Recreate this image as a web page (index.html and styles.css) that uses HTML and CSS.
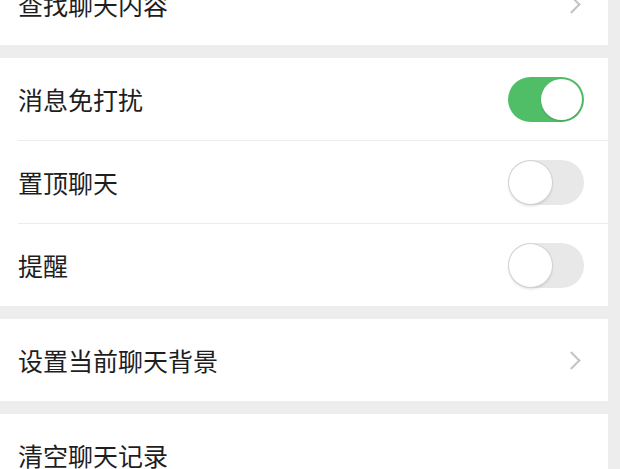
FILE: index.html
```html
<!DOCTYPE html>
<html lang="zh-CN">
<head>
    <meta charset="UTF-8">
    <meta name="viewport" content="width=device-width, initial-scale=1.0">
    <title>聊天信息</title>
    <link rel="stylesheet" href="styles.css">
</head>
<body>
    <div class="settings">
        <div class="group">
            <div class="row">
                <span class="label">查找聊天内容</span>
                <span class="chevron"></span>
            </div>
        </div>

        <div class="group">
            <div class="row">
                <span class="label">消息免打扰</span>
                <span class="switch on"><span class="knob"></span></span>
            </div>
            <div class="row">
                <span class="label">置顶聊天</span>
                <span class="switch"><span class="knob"></span></span>
            </div>
            <div class="row">
                <span class="label">提醒</span>
                <span class="switch"><span class="knob"></span></span>
            </div>
        </div>

        <div class="group">
            <div class="row">
                <span class="label">设置当前聊天背景</span>
                <span class="chevron"></span>
            </div>
        </div>

        <div class="group">
            <div class="row">
                <span class="label">清空聊天记录</span>
            </div>
        </div>
    </div>
</body>
</html>
```

FILE: styles.css
```css
body {
    margin: 0;
    background: #ededed;
    font-family: "Noto Sans CJK SC", "Noto Sans", sans-serif;
    color: #1e1e1e;
    overflow: hidden;
}

.settings {
    margin-top: -37px;
    margin-right: 12px;
    display: flex;
    flex-direction: column;
    gap: 13px;
}

.group {
    background: #fff;
}

.row {
    height: 82px;
    margin-left: 18px;
    padding-right: 24px;
    display: flex;
    align-items: center;
    justify-content: space-between;
    border-top: 1px solid #ececec;
}

.row:first-child {
    border-top: none;
}

.label {
    font-size: 25px;
    line-height: 1;
}

.chevron {
    width: 11px;
    height: 11px;
    margin-right: 6px;
    border-top: 2px solid #c4c4c6;
    border-right: 2px solid #c4c4c6;
    transform: rotate(45deg);
}

.switch {
    width: 76px;
    height: 45px;
    box-sizing: border-box;
    border-radius: 23px;
    background: #e8e8e8;
    display: flex;
    align-items: center;
    padding: 1px;
}

.switch .knob {
    width: 43px;
    height: 43px;
    border-radius: 50%;
    background: #fff;
    box-shadow: 0 0 0 1px #d2d2d2, 0 2px 3px rgba(0, 0, 0, 0.14);
}

.switch.on {
    background: #4fbe66;
    justify-content: flex-end;
    padding: 2px;
}

.switch.on .knob {
    width: 41px;
    height: 41px;
    box-shadow: 0 1px 2px rgba(0, 0, 0, 0.15);
}
```
